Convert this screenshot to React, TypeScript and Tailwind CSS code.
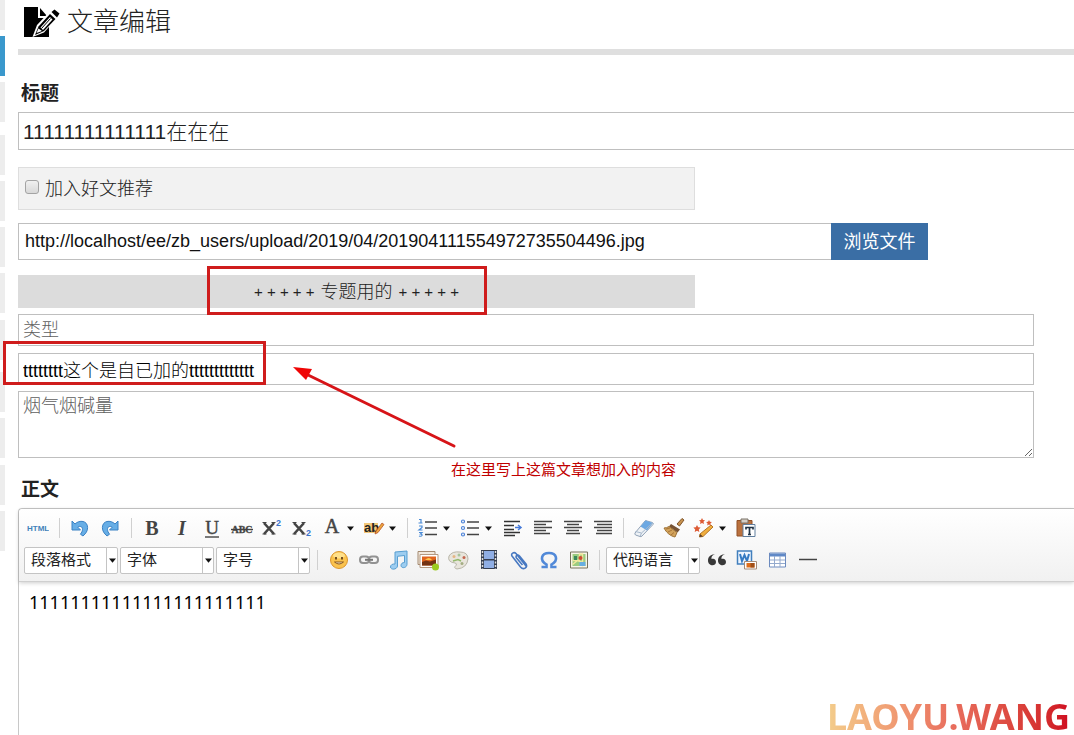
import type { ReactNode } from "react";
import { clsx } from "clsx";

interface IconButtonProps {
  label: string;
  children: ReactNode;
  dropdown?: boolean;
}

interface ToolbarSelectProps {
  label: string;
}

const fieldClass =
  "block border border-[#bfbfbf] bg-white px-1 text-lg text-black outline-none placeholder:text-[#5e5e5e]";

function Caret() {
  return (
    <svg width="7" height="5" viewBox="0 0 7 5" aria-hidden="true">
      <path d="M0 0.5h7L3.5 4.8z" fill="#111" />
    </svg>
  );
}

function IconButton({ label, children, dropdown }: IconButtonProps) {
  return (
    <button
      type="button"
      aria-label={label}
      className={clsx("flex h-7 shrink-0 items-center", dropdown ? "w-[42px]" : "w-[30px]")}
    >
      <span className="flex w-[30px] shrink-0 justify-center">
        <svg width="22" height="22" viewBox="0 0 22 22" fill="none" aria-hidden="true">
          {children}
        </svg>
      </span>
      {dropdown && <Caret />}
    </button>
  );
}

function Separator() {
  return (
    <span className="flex w-3 shrink-0 justify-center">
      <span className="h-5 w-px bg-[#d0d0d0]" />
    </span>
  );
}

function ToolbarSelect({ label }: ToolbarSelectProps) {
  return (
    <div className="relative mx-px h-[27px] w-[94px] shrink-0">
      <select
        aria-label={label}
        className="h-full w-full appearance-none rounded-xs border border-[#c4c4c4] bg-white pl-1.5 text-[15px] text-[#222] outline-none"
      >
        <option>{label}</option>
      </select>
      <span className="pointer-events-none absolute inset-y-0 right-0 flex w-3 items-center justify-center border-l border-[#c4c4c4]">
        <Caret />
      </span>
    </div>
  );
}

const glyph = { fontFamily: "Liberation Serif, serif", fontWeight: 700, fill: "#444" };

function FirstRow() {
  return (
    <div className="flex h-[30px] items-center">
      <IconButton label="HTML">
        <text x="0" y="14" fontSize="8" fontWeight="700" fontFamily="Liberation Sans, sans-serif" fill="#3f82ba">
          HTML
        </text>
      </IconButton>
      <Separator />
      <IconButton label="撤销">
        <path d="M3 4v9h8.500L8.800 10.200c2.200-1.700 4.900-.5 4.700 2.300-.1 1.800-.9 3.200-2.100 4.700l2.600 1.800c3-2.600 4.600-5.200 4.600-8.400C18.600 3.600 10.500 2.500 6 7z" fill="#67aee6" stroke="#3b82c4" />
      </IconButton>
      <IconButton label="重做">
        <path d="M19 4v9h-8.500l2.700-2.800c-2.200-1.700-4.900-.5-4.700 2.300.1 1.800.9 3.200 2.100 4.700L8 19c-3-2.600-4.600-5.200-4.600-8.400C3.400 3.600 11.500 2.500 16 7z" fill="#67aee6" stroke="#3b82c4" />
      </IconButton>
      <Separator />
      <IconButton label="加粗">
        <text x="11" y="18" textAnchor="middle" fontSize="20" style={glyph}>B</text>
      </IconButton>
      <IconButton label="斜体">
        <text x="11" y="18" textAnchor="middle" fontSize="20" fontStyle="italic" style={glyph}>I</text>
      </IconButton>
      <IconButton label="下划线">
        <text x="11" y="17" textAnchor="middle" fontSize="19" stroke="#444" strokeWidth=".4" style={{ ...glyph, fontWeight: 400 }}>U</text>
        <path d="M4 20h14" stroke="#444" strokeWidth="1.400" />
      </IconButton>
      <IconButton label="删除线">
        <text x="11" y="16" textAnchor="middle" fontSize="10" stroke="#444" strokeWidth=".3" style={glyph}>ABC</text>
        <path d="M0 12.500h22" stroke="#444" strokeWidth="1.400" />
      </IconButton>
      <IconButton label="上标">
        <path d="m3 6 10 11M13 6 3 17" stroke="#444" strokeWidth="2.600" />
        <path d="M1.500 5.500h4M10.500 5.500h4M1.500 17h4M10.500 17h4" stroke="#444" />
        <text x="15" y="9" fontSize="9" fontWeight="700" fontFamily="Liberation Sans, sans-serif" fill="#3a74cc">2</text>
      </IconButton>
      <IconButton label="下标">
        <path d="m3 6 10 11M13 6 3 17" stroke="#444" strokeWidth="2.600" />
        <path d="M1.500 5.500h4M10.500 5.500h4M1.500 17h4M10.500 17h4" stroke="#444" />
        <text x="15" y="19" fontSize="9" fontWeight="700" fontFamily="Liberation Sans, sans-serif" fill="#3a74cc">2</text>
      </IconButton>
      <IconButton label="字体颜色" dropdown>
        <text x="11" y="16" textAnchor="middle" fontSize="20" stroke="#444" strokeWidth=".5" style={{ ...glyph, fontWeight: 400 }}>A</text>
      </IconButton>
      <IconButton label="背景色" dropdown>
        <path d="M1 6h14v10H1z" fill="#f3c878" />
        <text x="1" y="15" fontSize="13" fontWeight="700" fontFamily="Liberation Sans, sans-serif" fill="#222">ab</text>
        <path d="m12 17 1-3 6-8 2 1.500-6 8z" fill="#eca63c" stroke="#b8542b" strokeWidth=".8" />
      </IconButton>
      <Separator />
      <IconButton label="有序列表" dropdown>
        <path d="M8 5h12M8 11h12M8 17.500h12" stroke="#444" strokeWidth="1.500" />
        <path d="M2 2.500h2v3M1.500 6h4M2 9h3v1.500L2 13h3.500M2 15.500h3L3.500 17c3 .2 1.500 3-1.500 2" stroke="#4b8bd6" strokeWidth="1.200" />
      </IconButton>
      <IconButton label="无序列表" dropdown>
        <path d="M8 5h12M8 11h12M8 17.500h12" stroke="#444" strokeWidth="1.500" />
        <g stroke="#4b82d8" strokeWidth="1.200">
          <circle cx="4" cy="4.500" r="1.500" />
          <circle cx="4" cy="11" r="1.500" />
          <circle cx="4" cy="17.500" r="1.500" />
        </g>
      </IconButton>
      <IconButton label="首行缩进">
        <path d="M3 4.500h16M3 8.500h10M3 12.500h10M3 15.500h16M3 18.500h11" stroke="#333" strokeWidth="1.700" />
        <path d="M14 10.500h6M17 8l3 2.500-3 2.500" stroke="#4479d8" strokeWidth="1.500" />
      </IconButton>
      <IconButton label="居左对齐">
        <path d="M3 4.500h18M3 7.500h12M3 10.500h18M3 13.500h12M3 16.500h16" stroke="#444" strokeWidth="1.400" />
      </IconButton>
      <IconButton label="居中对齐">
        <path d="M3 4.500h18M6 7.500h12M3 10.500h18M6 13.500h12M5 16.500h14" stroke="#444" strokeWidth="1.400" />
      </IconButton>
      <IconButton label="居右对齐">
        <path d="M3 4.500h18M6 7.500h15M3 10.500h18M6 13.500h15M5 16.500h16" stroke="#444" strokeWidth="1.400" />
      </IconButton>
      <Separator />
      <IconButton label="清除格式">
        <path d="m2 16 10-12q1-1 2 0l5.500 1.500q1.500 1 .5 2L9 19q-1 1-2 .5L2.500 18q-1-1-.5-2z" fill="#eef2f6" stroke="#91a2b6" />
        <path d="m7.500 9.500 5-6 7.500 2.500-6 7.500z" fill="#6ca8e2" />
        <path d="m7 19.500 1.500-3.500L20 5.500M8.500 16l-6-1.500" stroke="#a6b8cc" />
      </IconButton>
      <IconButton label="格式刷">
        <path d="m14 7 5-5.500 2 1.500-4.500 6z" fill="#c8924e" stroke="#80552a" />
        <path d="m8 7 9 5.500-2.500 3-8.500-6z" fill="#765233" />
        <path d="M6 9.500q-2.500 1.500-5 1.500c2 4 6 8 11 9l2-4.500z" fill="#d2a35c" stroke="#9d7135" />
        <path d="m3 12 4-1M5 15l4-2M8 18l3-2.500" stroke="#a87436" />
      </IconButton>
      <IconButton label="自动排版" dropdown>
        <path d="m7 17 11-9 2 2-10 9.500-3.500.5z" fill="#f0ae3d" stroke="#b57527" />
        <path d="m7 17 3 2.500-3.500.5z" fill="#5e402b" />
        <g fill="#dd5b35">
          <path d="m9 1 1 2 2 .2-1.500 1.600L11 7 9 6 7 7l.5-2.200L6 3.200 8 3z" />
          <path d="m4 8 1.200 2.300 2.400.3-1.800 1.800.5 2.600L4 13.800 1.700 15l.5-2.600-1.800-1.800 2.400-.3z" />
          <path d="m16 3 .9 1.700 2 .3-1.500 1.400.4 2.100-1.800-1-1.800 1 .4-2.100L13.100 5l2-.3z" />
        </g>
      </IconButton>
      <IconButton label="粘贴为文本">
        <path d="M2 3.500h15v15.500H2z" fill="#ba713e" stroke="#915127" />
        <path d="M6 2h7v4H6z" fill="#d5cec5" stroke="#797067" />
        <path d="M8 7.500h12v12H8z" fill="#fff" stroke="#607e9d" />
        <path d="M11 12.500v-2h7v2m-3.500-2v7m-1.500 0h3" stroke="#223447" strokeWidth="1.700" />
      </IconButton>
    </div>
  );
}

function SecondRow() {
  return (
    <div className="flex h-[34px] items-center">
      <ToolbarSelect label="段落格式" />
      <ToolbarSelect label="字体" />
      <ToolbarSelect label="字号" />
      <Separator />
      <IconButton label="表情">
        <circle cx="12" cy="11" r="8.500" fill="#fac34e" stroke="#dc962d" />
        <ellipse cx="12" cy="6.500" rx="6" ry="3" fill="#ffe08b" />
        <path d="M9 8v2.500M15 8v2.500" stroke="#664018" strokeWidth="1.800" />
        <path d="M7.500 13h9q-4.500 4-9 0z" fill="#fff7d8" stroke="#8b561d" />
      </IconButton>
      <IconButton label="超链接">
        <g stroke="#929292" strokeWidth="2">
          <rect x="3" y="7.500" width="9" height="6.500" rx="3" />
          <rect x="12" y="7.500" width="9" height="6.500" rx="3" />
          <path d="M8 10.800h8" stroke="#777" />
        </g>
      </IconButton>
      <IconButton label="音乐">
        <path d="M8 3 20 2v13.500c-.5 4-6 4-6 1 0-2 1.500-3 3.500-3V6.500l-7 .8v9.700c-.5 4-7 4-7 1 0-2.200 2-3.200 4.500-3z" fill="#9dcdf0" stroke="#579ed1" />
      </IconButton>
      <IconButton label="图片">
        <path d="M1 2.500h17v13H1z" fill="#f1e9de" stroke="#a58a71" />
        <path d="M3 5.500h18v13H3z" fill="#fff" stroke="#b59a82" />
        <path d="M5 7.500h14v9H5z" fill="#e0651f" />
        <path d="m5 13 4-1.500 4 1 6-2v6H5z" fill="#733315" />
        <path d="M8 11q4-4 7 0z" fill="#ffc44b" />
        <circle cx="18.500" cy="18" r="3.500" fill="#9ccd22" />
      </IconButton>
      <IconButton label="涂鸦">
        <path d="M2 7q3-5 11-4 8 0 8 7-1 9-11 10-4-1-1-3.500 1.500-2-1-2.500-8-1-6-7z" fill="#e8e5dc" stroke="#b9b6a9" />
        <circle cx="7" cy="7.500" r="1.500" fill="#e5b684" />
        <circle cx="12" cy="6" r="1.500" fill="#a8c49b" />
        <circle cx="17" cy="8.500" r="1.500" fill="#c4664f" />
        <circle cx="15" cy="14.500" r="1.500" fill="#a4ad84" />
        <path d="m6 12 5-1.500 3 1.500" stroke="#93b96a" strokeWidth="1.500" />
      </IconButton>
      <IconButton label="视频">
        <path d="M4 1h16v19H4z" fill="#353e50" />
        <path d="M7 2h10v8H7zM7 11.500h10v7.500H7z" fill="#8faee5" />
        <path d="M5.500 2v18M18.500 2v18" stroke="#ddd" strokeWidth="1.500" strokeDasharray="2 1.500" />
      </IconButton>
      <IconButton label="附件">
        <path d="M19 17 9 4.500c-2-2-5.500 0-4 2.500l8.500 11c3 3.500 7.500.5 5.500-3L12.500 7c-2-2-4.500 0-3 2l6 7" stroke="#4778c1" strokeWidth="1.600" />
      </IconButton>
      <IconButton label="特殊字符">
        <path d="M4.500 18h5v-2.500C2 11 4.500 4 12 4s10 7 2.500 11.500V18h5" stroke="#5189d8" strokeWidth="2.600" />
      </IconButton>
      <IconButton label="地图">
        <path d="M3.500 3h17v16h-17z" fill="#f8f5e8" stroke="#77735c" />
        <path d="M5.500 5h13v12h-13z" fill="#9bcc80" />
        <path d="M5.500 11.500h7V5h3v12.500M5.500 15.500l5-4 8 3" stroke="#f3e89d" strokeWidth="1.500" />
        <path d="M12.500 13h6v4h-6z" fill="#68aee0" />
        <circle cx="13.500" cy="9" r="2" fill="#cd4c33" />
        <path d="M7 7h3v4H7z" fill="#3c885c" />
      </IconButton>
      <Separator />
      <ToolbarSelect label="代码语言" />
      <IconButton label="引用">
        <path d="M10 5.500Q6 6 6.500 10c2.500-1 4.500.5 4.500 3 0 4.500-8 4.500-8-1.500C3 7.500 6 5 10 5.500zM20 5.500q-4 .5-3.500 4.500c2.500-1 4.500.5 4.500 3 0 4.500-8 4.500-8-1.500 0-4 3-6.500 7-6z" fill="#383838" />
      </IconButton>
      <IconButton label="图片转存">
        <path d="M2.500 2h14v13h-14z" fill="#edf5ff" stroke="#417fbd" strokeWidth="1.500" />
        <path d="m5 5 2 7 2.500-6 2.500 6 2-7" stroke="#347ac3" strokeWidth="2" />
        <path d="M9.500 12.500h12v7.500h-12z" fill="#fff" stroke="#a58b78" />
        <path d="M11.500 14h8v4.500h-8z" fill="#df6e1b" />
        <path d="M15.500 14h4v4.500h-4z" fill="#a04f18" />
      </IconButton>
      <IconButton label="插入表格">
        <path d="M4.500 4h16v14h-16z" fill="#fff" stroke="#6c8bbf" />
        <path d="M5 4.500h15v3H5z" fill="#6089c7" />
        <path d="M5 11h15M5 14.500h15M9.500 7v11M15 7v11" stroke="#94aacd" />
      </IconButton>
      <IconButton label="分隔线">
        <path d="M4 10.500h18" stroke="#444" strokeWidth="1.500" />
      </IconButton>
    </div>
  );
}

function SideStrip() {
  return (
    <nav aria-label="菜单" className="flex w-[5px] shrink-0 flex-col">
      <div className="h-[30px] bg-[#ededed]" />
      <div className="mt-1.5 h-10 bg-[#3a98cc]" />
      <div className="mt-1.5 h-10 bg-[#ededed]" />
      <div className="mt-[13px] h-10 bg-[#ededed]" />
      <div className="mt-1.5 h-10 bg-[#ededed]" />
      <div className="mt-1.5 h-10 bg-[#ededed]" />
      <div className="mt-1.5 h-10 bg-[#ededed]" />
      <div className="mt-[7px] h-10 bg-[#ededed]" />
      <div className="mt-3 h-10 bg-[#ededed]" />
      <div className="mt-1.5 h-10 bg-[#ededed]" />
      <div className="mt-[7px] h-10 bg-[#ededed]" />
      <div className="mt-1.5 h-10 bg-[#ededed]" />
    </nav>
  );
}

export default function App() {
  return (
    <div className="relative flex min-h-screen overflow-hidden bg-white font-['Liberation_Sans','Noto_Sans_CJK_SC',sans-serif] text-[#222]">
      <SideStrip />
      <main className="ml-[13px] flex min-w-0 flex-1 flex-col">
        <header className="flex h-[55px] items-center border-b-6 border-[#dfdfdf] pb-1.5 pl-1.5">
          <svg width="36" height="32" viewBox="0 0 36 32" aria-hidden="true">
            <path d="M0 1h14v11h11v19H0z" fill="#000" />
            <path d="m16 2 7 8h-7z" fill="#000" />
            <path d="M8.500 31 13 19 28 3l8 5.500-16 18z" fill="#fff" />
            <path d="m27.500 6 3-2.500 5 4-2.500 4z" fill="#000" />
            <path d="m14.500 20.500 11.500-12.500 5.500 5L20 25l-9 4z" fill="#000" />
            <path d="m16.500 21.500 9.500-10.500 2.500 2.500L19 24z" fill="#fff" />
            <path d="m17.500 22.500 9-10" stroke="#000" />
            <path d="m12.500 27 2-4.500 3.500 2.500z" fill="#fff" />
          </svg>
          <h1 className="ml-[7px] text-[26px] leading-8 font-light">文章编辑</h1>
        </header>

        <label htmlFor="title" className="mt-[25px] mb-1 ml-[3px] text-[19px] leading-7 font-bold">
          标题
        </label>
        <input
          id="title"
          defaultValue="11111111111111在在在"
          className="h-[38px] w-full border border-r-0 border-[#bfbfbf] px-1 pb-0.5 text-[21px] font-light outline-none"
        />

        <div className="mt-[17px] flex h-[43px] w-[677px] max-w-full items-center border border-[#dedede] bg-[#f2f2f2] pl-1.5">
          <input
            id="recommend"
            type="checkbox"
            className="mb-1 size-3.5 appearance-none rounded-[3px] border border-[#a3a3a3] bg-linear-to-b from-[#f0f0f0] to-[#d8d8d8] checked:bg-[#3a98cc]"
          />
          <label htmlFor="recommend" className="ml-1.5 text-lg font-light">
            加入好文推荐
          </label>
        </div>

        <div className="mt-[13px] flex h-[37px]">
          <input
            aria-label="图片地址"
            defaultValue="http://localhost/ee/zb_users/upload/2019/04/201904111554972735504496.jpg"
            className="w-[77%] border border-r-0 border-[#bfbfbf] px-1.5 pb-0.5 text-lg text-[#111] outline-none"
          />
          <button type="button" className="w-[97px] bg-[#3a6ea5] text-lg text-white">
            浏览文件
          </button>
        </div>

        <div className="relative mt-[15px] flex h-[33px] w-[677px] max-w-full items-center justify-center gap-1.5 bg-[#dcdcdc] text-lg font-light">
          <span className="text-[15px]">+ + + + +</span>
          <span>专题用的</span>
          <span className="text-[15px]">+ + + + +</span>
          <div className="absolute -top-[9px] left-[189px] h-[49px] w-[280px] border-3 border-[#cf1c1c]" />
        </div>

        <div className="mt-1.5 mr-10">
          <input aria-label="类型" placeholder="类型" className={clsx(fieldClass, "h-8 w-full font-light")} />
          <div className="relative mt-[7px]">
            <input
              aria-label="自定义内容"
              defaultValue="tttttttt这个是自已加的ttttttttttttt"
              className={clsx(fieldClass, "h-8 w-full font-light")}
            />
            <div className="absolute -top-3 -left-[15px] h-11 w-[263px] border-3 border-[#cf1c1c]" />
            <svg
              className="absolute top-3.5 left-[274px] z-10"
              width="165"
              height="84"
              viewBox="0 0 165 84"
              aria-hidden="true"
            >
              <path d="M14 7 162 79" stroke="#d71418" strokeWidth="3" strokeLinecap="round" />
              <path d="m1 0 19 2-6 11z" fill="#ef0505" />
            </svg>
            <p className="absolute top-[105px] left-[433px] z-10 text-[15px] leading-6 whitespace-nowrap text-[#c00000]">
              在这里写上这篇文章想加入的内容
            </p>
          </div>
          <textarea
            aria-label="烟气烟碱量"
            placeholder="烟气烟碱量"
            className={clsx(fieldClass, "mt-1.5 h-[67px] w-full leading-7 font-light")}
          />
        </div>

        <label htmlFor="content" className="mt-[18px] mb-1 ml-[3px] text-[19px] leading-7 font-bold">
          正文
        </label>
        <section className="flex flex-1 flex-col rounded-tl border-t border-l border-[#c8c8c8]">
          <div className="z-10 rounded-tl border-b border-[#cfcfcf] bg-linear-to-b from-white to-[#f1f1f1] px-1 py-1 shadow-[0_1px_4px_rgba(0,0,0,0.2)]">
            <FirstRow />
            <SecondRow />
          </div>
          <textarea
            id="content"
            defaultValue="11111111111111111111111"
            className="w-full flex-1 resize-none px-2.5 pt-1.5 font-['Noto_Sans','Noto_Sans_CJK_SC',sans-serif] text-lg text-black outline-none"
          />
        </section>
      </main>

      <div className="absolute right-1 bottom-0 z-20 bg-linear-to-r from-[#f3cd8b] via-[#e9705f] to-[#cf0820] bg-clip-text font-['Noto_Sans',sans-serif] text-[36px] leading-9 font-bold text-transparent">
        LAOYU.WANG
      </div>
    </div>
  );
}
